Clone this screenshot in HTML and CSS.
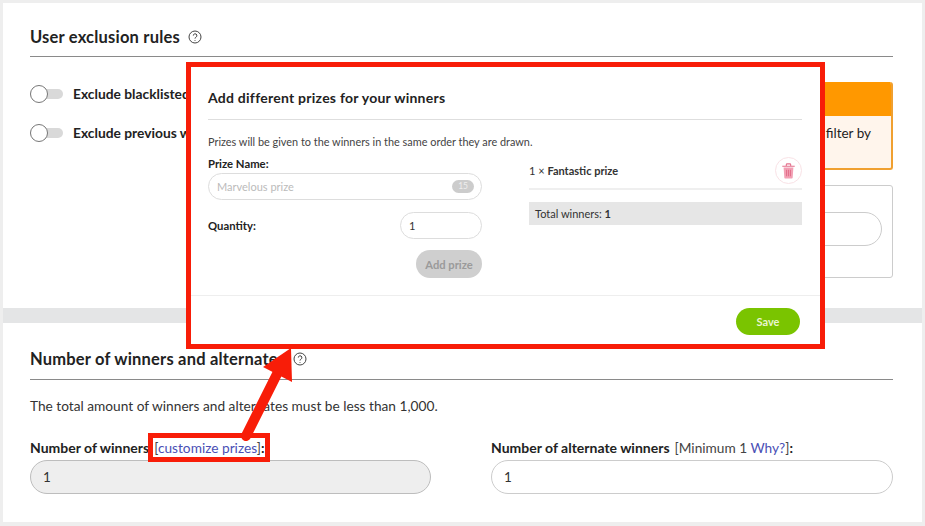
FILE: index.html
```html
<!DOCTYPE html>
<html lang="en">
<head>
<meta charset="utf-8">
<title>Giveaway settings</title>
<link rel="stylesheet" href="styles.css">
</head>
<body>
<main class="panel">
  <section class="section top">
    <h2 class="heading">User exclusion rules
      <svg class="help" viewBox="0 0 14 14"><circle cx="7" cy="7" r="6"/><path d="M5.3 5.6a1.8 1.8 0 1 1 2.6 1.6c-.6.3-.9.7-.9 1.4"/><path d="M7 10v.8"/></svg>
    </h2>
    <div class="columns">
      <div class="toggles">
        <div class="toggle-row"><span class="toggle"><span class="knob"></span></span><b>Exclude blacklisted users</b></div>
        <div class="toggle-row"><span class="toggle"><span class="knob"></span></span><b>Exclude previous winners</b></div>
      </div>
      <div class="side">
        <div class="alert"><div class="alert-head"></div><div class="alert-body">filter by</div></div>
        <div class="card"><div class="card-input"></div></div>
      </div>
    </div>
  </section>
  <div class="separator"></div>
  <section class="section bottom">
    <h2 class="heading heading-tight">Number of winners and alternates
      <svg class="help" viewBox="0 0 14 14"><circle cx="7" cy="7" r="6"/><path d="M5.3 5.6a1.8 1.8 0 1 1 2.6 1.6c-.6.3-.9.7-.9 1.4"/><path d="M7 10v.8"/></svg>
    </h2>
    <p class="note">The total amount of winners and alternates must be less than 1,000.</p>
    <div class="columns fields">
      <div>
        <div class="label"><b>Number of winners</b> <span class="hint">[<a class="link">customize prizes</a>]<b>:</b></span></div>
        <div class="input disabled">1</div>
      </div>
      <div>
        <div class="label"><b>Number of alternate winners</b> <span class="hint">[Minimum 1 <a class="link">Why?</a>]<b>:</b></span></div>
        <div class="input">1</div>
      </div>
    </div>
  </section>
</main>

<div class="highlight"></div>
<svg class="arrow" viewBox="0 0 925 526"><path class="arrow-shaft" d="M246 436 278 372"/><path class="arrow-head" d="M291 348 263 367 292 382Z"/></svg>

<div class="modal">
  <h3 class="modal-title">Add different prizes for your winners</h3>
  <p class="modal-note">Prizes will be given to the winners in the same order they are drawn.</p>
  <div class="modal-columns">
    <div class="prize-form">
      <div class="modal-label">Prize Name:</div>
      <div class="modal-input name"><span class="placeholder">Marvelous prize</span><span class="counter">15</span></div>
      <div class="qty-row"><span class="modal-label">Quantity:</span><div class="modal-input qty">1</div></div>
      <div class="add-row"><span class="add-btn">Add prize</span></div>
    </div>
    <div class="prize-list">
      <div class="prize-item">
        <span>1 × <b>Fantastic prize</b></span>
        <span class="trash">
          <svg viewBox="0 0 16 18"><path class="trash-fill" d="M2.5 5h11l-.8 11.2c0 .7-.5 1.2-1.2 1.2h-7c-.7 0-1.2-.5-1.2-1.2z"/><path class="trash-line" d="M1 3.6h14M5.5 3.3V2c0-.6.4-1 1-1h3c.6 0 1 .4 1 1v1.3M5.8 7.5v7.5M8 7.5v7.5M10.2 7.5v7.5"/></svg>
        </span>
      </div>
      <div class="total">Total winners: <b>1</b></div>
    </div>
  </div>
  <div class="modal-footer"><span class="save-btn">Save</span></div>
</div>
</body>
</html>
```
FILE: styles.css
```css
* { box-sizing: border-box; }
html, body { margin: 0; height: 100%; }
body {
  background: #eeeeee;
  font-family: "Lato", "Noto Sans", sans-serif;
  color: #222;
  padding: 3px;
  overflow: hidden;
  position: relative;
}
.panel {
  width: 919px;
  height: 519px;
  background: #fff;
  display: flex;
  flex-direction: column;
}
.section { padding: 0 29px 0 27px; }
.top { height: 305px; padding-top: 21px; }
.bottom { flex: 1; padding-top: 24px; }
.separator { height: 15px; background: #e4e5e6; }
.heading {
  margin: 0;
  font-size: 16.5px;
  letter-spacing: .2px;
  line-height: 24px;
  font-weight: 700;
  color: #222;
  padding: 1px 0 7px;
  border-bottom: 1px solid #8a8a8a;
  display: flex;
  align-items: center;
  gap: 8px;
}
.heading-tight { padding: 0 0 8px; }
.help { width: 14px; height: 14px; fill: none; stroke: #444; stroke-width: 1; }
.columns {
  display: grid;
  grid-template-columns: 401px 402px;
  gap: 60px;
}
.toggles { padding-top: 27px; display: flex; flex-direction: column; gap: 19px; }
.toggle-row { display: flex; align-items: center; gap: 10px; font-size: 13.8px; height: 20px; }
.toggle-row b { padding-bottom: 2px; }
.toggle {
  width: 33px; height: 10px; background: #d9d9d9; border-radius: 5px;
  position: relative; display: block; flex: none;
}
.knob {
  position: absolute; left: 0; top: -4px; width: 18px; height: 18px;
  background: #fff; border: 1px solid #777; border-radius: 50%;
}
.side { padding-top: 25px; display: flex; flex-direction: column; gap: 15px; }
.alert {
  height: 88px; border: 2px solid #f0a030; border-top: 0; border-radius: 3px;
  background: #fff5ec; overflow: hidden;
}
.alert-head { height: 34px; background: #ff9800; margin: 0 -2px; }
.alert-body {
  text-align: right; font-size: 13.5px; line-height: 20px; padding: 7px 20px 0 0; color: #222;
}
.card { height: 93px; border: 1px solid #ccc; border-radius: 3px; padding: 26px 10px 0 40px; }
.card-input { height: 34px; border: 1px solid #ccc; border-radius: 17px; }
.note { margin: 0; padding-top: 17px; font-size: 13.7px; line-height: 18px; color: #333; }
.fields { padding-top: 24px; }
.label { font-size: 14px; line-height: 18px; height: 21px; display: flex; gap: 5px; }
.hint { color: #444; font-size: 13.7px; }
.hint b { color: #222; }
.link { color: #4a4fb5; }
.input {
  height: 34px; border: 1px solid #ccc; border-radius: 17px;
  padding: 0 12px; font-size: 13.5px; line-height: 32px; color: #333;
}
.disabled { background: #eeeeee; border-color: #bdbdbd; }

.highlight {
  position: absolute; left: 148px; top: 433px; width: 122px; height: 29px;
  border: 5px solid #f81d08;
}
.arrow { position: absolute; left: 0; top: 0; width: 925px; height: 526px; pointer-events: none; }
.arrow-shaft { stroke: #f81d08; stroke-width: 10; stroke-linecap: round; fill: none; }
.arrow-head { fill: #f81d08; }

.modal {
  position: absolute; left: 186px; top: 62px; width: 639px; height: 287px;
  background: #fff; border: 5px solid #f81d08;
  padding: 20px 18px 0 17px;
  display: flex; flex-direction: column;
  color: #333;
}
.modal-title {
  margin: 0; font-size: 14px; letter-spacing: .25px; line-height: 22px; font-weight: 700; color: #222;
  padding-bottom: 10px; border-bottom: 1px solid #dedede;
}
.modal-note { margin: 0; padding-top: 14px; font-size: 10.9px; line-height: 16px; color: #444; }
.modal-columns { display: grid; grid-template-columns: 274px 273px; gap: 47px; }
.modal-label { font-size: 11.3px; font-weight: 700; line-height: 14px; color: #222; }
.prize-form { padding-top: 7px; }
.modal-input {
  height: 27px; border: 1px solid #ddd; border-radius: 14px; display: flex; align-items: center;
  justify-content: space-between; font-size: 11px; padding: 0 7px 0 8px; color: #333;
}
.name { margin-top: 2px; }
.placeholder { color: #bbb; }
.counter {
  background: #ccc; color: #eee; font-size: 8.5px; line-height: 13px; padding: 0 6px; border-radius: 7px;
}
.qty-row { display: flex; justify-content: space-between; align-items: center; margin-top: 12px; }
.qty { width: 82px; }
.add-row { display: flex; justify-content: flex-end; margin-top: 11px; }
.add-btn {
  width: 66px; height: 28px; background: #cfcfcf; color: #9a9a9a; border-radius: 14px;
  font-size: 11.2px; font-weight: 700; display: flex; align-items: center; justify-content: center;
}
.prize-list { padding-top: 7px; }
.prize-item {
  height: 33px; display: flex; justify-content: space-between; align-items: center;
  font-size: 11px; border-bottom: 2px solid #efefef; padding-bottom: 4px;
}
.trash {
  width: 27px; height: 27px; border: 1px solid #f9e2e6; border-radius: 50%; display: flex;
  align-items: center; justify-content: center;
}
.trash svg { width: 15px; height: 16px; }
.trash-fill { fill: #f2a0b4; }
.trash-line { fill: none; stroke: #e3708c; stroke-width: 1.2; }
.total { margin-top: 12px; height: 23px; background: #e6e6e6; font-size: 11px; line-height: 23px; padding-left: 6px; }
.modal-footer {
  margin: auto -18px 0 -17px; height: 49px; border-top: 1px solid #eee; display: flex; align-items: center;
  justify-content: flex-end; padding: 3px 20px 0 0;
}
.save-btn {
  width: 64px; height: 27px; background: #7ac400; color: #eaf5d0; border-radius: 14px;
  font-size: 11px; font-weight: 700; display: flex; align-items: center; justify-content: center;
}
```
